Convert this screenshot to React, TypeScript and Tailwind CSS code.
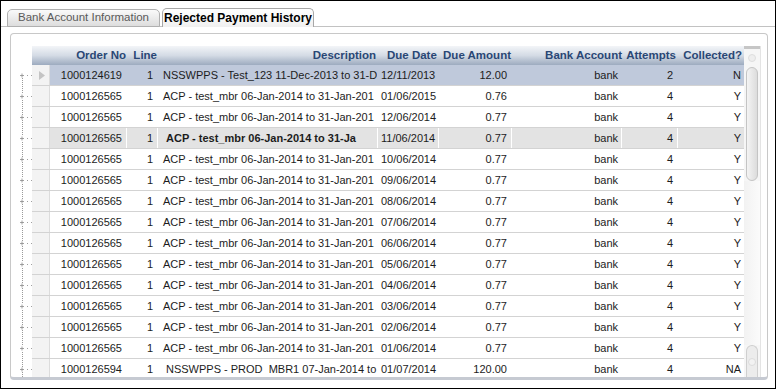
import React from 'react';

interface Row {
  order: string;
  line: string;
  desc: string;
  due: string;
  amount: string;
  bank: string;
  attempts: string;
  collected: string;
  selected?: boolean;
  bold?: boolean;
  indent?: boolean;
}

const acp = 'ACP - test_mbr 06-Jan-2014 to 31-Jan-201';

const rows: Row[] = [
  { order: '1000124619', line: '1', desc: 'NSSWPPS - Test_123 11-Dec-2013 to 31-D', due: '12/11/2013', amount: '12.00', bank: 'bank', attempts: '2', collected: 'N', selected: true },
  { order: '1000126565', line: '1', desc: acp, due: '01/06/2015', amount: '0.76', bank: 'bank', attempts: '4', collected: 'Y' },
  { order: '1000126565', line: '1', desc: acp, due: '12/06/2014', amount: '0.77', bank: 'bank', attempts: '4', collected: 'Y' },
  { order: '1000126565', line: '1', desc: 'ACP - test_mbr 06-Jan-2014 to 31-Ja', due: '11/06/2014', amount: '0.77', bank: 'bank', attempts: '4', collected: 'Y', bold: true, indent: true },
  { order: '1000126565', line: '1', desc: acp, due: '10/06/2014', amount: '0.77', bank: 'bank', attempts: '4', collected: 'Y' },
  { order: '1000126565', line: '1', desc: acp, due: '09/06/2014', amount: '0.77', bank: 'bank', attempts: '4', collected: 'Y' },
  { order: '1000126565', line: '1', desc: acp, due: '08/06/2014', amount: '0.77', bank: 'bank', attempts: '4', collected: 'Y' },
  { order: '1000126565', line: '1', desc: acp, due: '07/06/2014', amount: '0.77', bank: 'bank', attempts: '4', collected: 'Y' },
  { order: '1000126565', line: '1', desc: acp, due: '06/06/2014', amount: '0.77', bank: 'bank', attempts: '4', collected: 'Y' },
  { order: '1000126565', line: '1', desc: acp, due: '05/06/2014', amount: '0.77', bank: 'bank', attempts: '4', collected: 'Y' },
  { order: '1000126565', line: '1', desc: acp, due: '04/06/2014', amount: '0.77', bank: 'bank', attempts: '4', collected: 'Y' },
  { order: '1000126565', line: '1', desc: acp, due: '03/06/2014', amount: '0.77', bank: 'bank', attempts: '4', collected: 'Y' },
  { order: '1000126565', line: '1', desc: acp, due: '02/06/2014', amount: '0.77', bank: 'bank', attempts: '4', collected: 'Y' },
  { order: '1000126565', line: '1', desc: acp, due: '01/06/2014', amount: '0.77', bank: 'bank', attempts: '4', collected: 'Y' },
  { order: '1000126594', line: '1', desc: 'NSSWPPS - PROD  MBR1 07-Jan-2014 to 0', due: '01/07/2014', amount: '120.00', bank: 'bank', attempts: '4', collected: 'NA', indent: true },
];

function TreeNode() {
  return (
    <div className="h-[21px] flex items-center pl-[9px] gap-[3px]">
      <svg width="5" height="5" viewBox="0 0 5 5" className="relative z-10 bg-white">
        <path d="M0 2.5H5M2.5 0V5" stroke="#8a8a8a" strokeWidth="1" />
      </svg>
      <span className="flex gap-[1px]">
        <span className="w-[1px] h-[1px] bg-[#a0a0a0]" />
        <span className="w-[1px] h-[1px]" />
        <span className="w-[1px] h-[1px] bg-[#a0a0a0]" />
      </span>
    </div>
  );
}

function GridRow({ r }: { r: Row }) {
  const bg = r.selected ? 'bg-[#bfc9db]' : r.bold ? 'bg-[#e3e3e3]' : 'bg-white';
  const sep = r.bold ? 'border-r border-white' : 'border-r border-transparent';
  return (
    <div className="flex h-[21px] shrink-0 border-b border-[#d3d3d3]">
      <div className="w-[18px] shrink-0 bg-[#f3f3f3] border-r border-[#dcdcdc] flex items-center pl-[7px]">
        {r.selected && (
          <svg width="6" height="9" viewBox="0 0 6 9">
            <path d="M0 0L6 4.5L0 9Z" fill="#c4c4c4" />
          </svg>
        )}
      </div>
      <div className={`flex flex-1 items-center text-[11px] text-[#1c1c1c] ${bg} ${r.bold ? 'font-bold' : ''}`}>
        <div className={`w-[77px] shrink-0 h-full flex items-center justify-end pr-[4px] font-normal ${sep}`}>{r.order}</div>
        <div className={`w-[31px] shrink-0 h-full flex items-center justify-end pr-[4px] font-normal ${sep}`}>{r.line}</div>
        <div className={`w-[220px] shrink-0 h-full flex items-center overflow-hidden whitespace-pre ${r.indent ? 'pl-[8px]' : 'pl-[5px]'} ${sep}`}>{r.desc}</div>
        <div className={`w-[61px] shrink-0 h-full flex items-center pl-[3px] font-normal ${sep}`}>{r.due}</div>
        <div className={`w-[73px] shrink-0 h-full flex items-center justify-end pr-[4px] font-normal ${sep}`}>{r.amount}</div>
        <div className={`w-[110px] shrink-0 h-full flex items-center justify-end pr-[3px] font-normal ${sep}`}>{r.bank}</div>
        <div className={`w-[56px] shrink-0 h-full flex items-center justify-end pr-[4px] font-normal ${sep}`}>{r.attempts}</div>
        <div className="w-[66px] shrink-0 h-full flex items-center justify-end pr-[3px] font-normal">{r.collected}</div>
      </div>
    </div>
  );
}

function Scrollbar() {
  return (
    <div className="w-[17px] shrink-0 flex flex-col bg-[#f6f6f6] border-r border-[#e4e4e4]">
      <div className="h-[3px] bg-[#c6c6c6]" />
      <div className="h-[18px] flex items-center justify-center">
        <div className="w-[8px] h-[8px] rounded-full bg-[#eeeeee] border border-[#dedede]" />
      </div>
      <div className="h-[114px] mx-[2px] rounded-[6px] border border-[#c4c4c4] bg-gradient-to-r from-[#f4f4f4] to-[#dcdcdc]" />
      <div className="flex-1 bg-gradient-to-r from-[#f2f2f2] to-[#fbfbfb]" />
      <div className="h-[32px] mx-[2px] rounded-t-[6px] border border-b-0 border-[#cfcfcf] bg-[#ececec] flex items-center justify-center">
        <div className="w-[8px] h-[8px] rounded-full bg-[#f2f2f2] border border-[#dcdcdc]" />
      </div>
    </div>
  );
}

export default function App() {
  return (
    <div className="w-[776px] h-[389px] border border-black bg-white overflow-hidden font-['Liberation_Sans',Arial,sans-serif]">
      {/* Tabs */}
      <div className="flex items-end h-[26px] pl-[6px] border-b border-[#c2c2c2]">
        <div className="w-[153px] h-[18px] -mb-[1px] rounded-t-[5px] border border-[#b0b0b0] bg-gradient-to-b from-[#fafafa] to-[#dddddd] flex items-center justify-center text-[11.5px] text-[#5a5a5a]">
          Bank Account Information
        </div>
        <div className="w-[152px] h-[19px] ml-[2px] -mb-[1px] rounded-t-[5px] border border-b-0 border-[#a8a8a8] bg-gradient-to-b from-[#ffffff] to-[#f0f0f0] flex items-center justify-center text-[12px] font-bold text-black">
          Rejected Payment History
        </div>
      </div>

      {/* Panel */}
      <div className="ml-[9px] mt-[6px] w-[758px] h-[347px] rounded-[4px] border border-[#c8c8c8] border-b-[3px] border-b-[#c6cad2] pt-[12px] flex">
        <div className="w-[21px] shrink-0 relative pt-[19px] overflow-hidden">
          <div className="absolute left-[11px] top-[29px] bottom-0 border-l border-dotted border-[#9a9a9a]" />
          {rows.map((_, i) => (
            <TreeNode key={i} />
          ))}
        </div>
        <div className="w-[712px] shrink-0 flex flex-col overflow-hidden">
          <div className="h-[19px] shrink-0 flex items-center bg-gradient-to-b from-[#f3f5f8] via-[#d4dbe5] to-[#9dabbf] text-[11.5px] font-bold text-[#2a4775] whitespace-nowrap">
            <div className="w-[18px] shrink-0" />
            <div className="w-[77px] shrink-0 text-right pr-[1px]">Order No</div>
            <div className="w-[31px] shrink-0 text-right pr-[1px]">Line</div>
            <div className="w-[220px] shrink-0 text-right pr-[2px]">Description</div>
            <div className="w-[61px] shrink-0 pl-[9px]">Due Date</div>
            <div className="w-[73px] shrink-0 text-right pr-[1px]">Due Amount</div>
            <div className="w-[110px] shrink-0 flex justify-end">Bank Account</div>
            <div className="w-[56px] shrink-0 text-right pr-[2px]">Attempts</div>
            <div className="w-[66px] shrink-0 text-right pr-[2px]">Collected?</div>
          </div>
          {rows.map((r, i) => (
            <GridRow key={i} r={r} />
          ))}
        </div>
        <Scrollbar />
      </div>
    </div>
  );
}
